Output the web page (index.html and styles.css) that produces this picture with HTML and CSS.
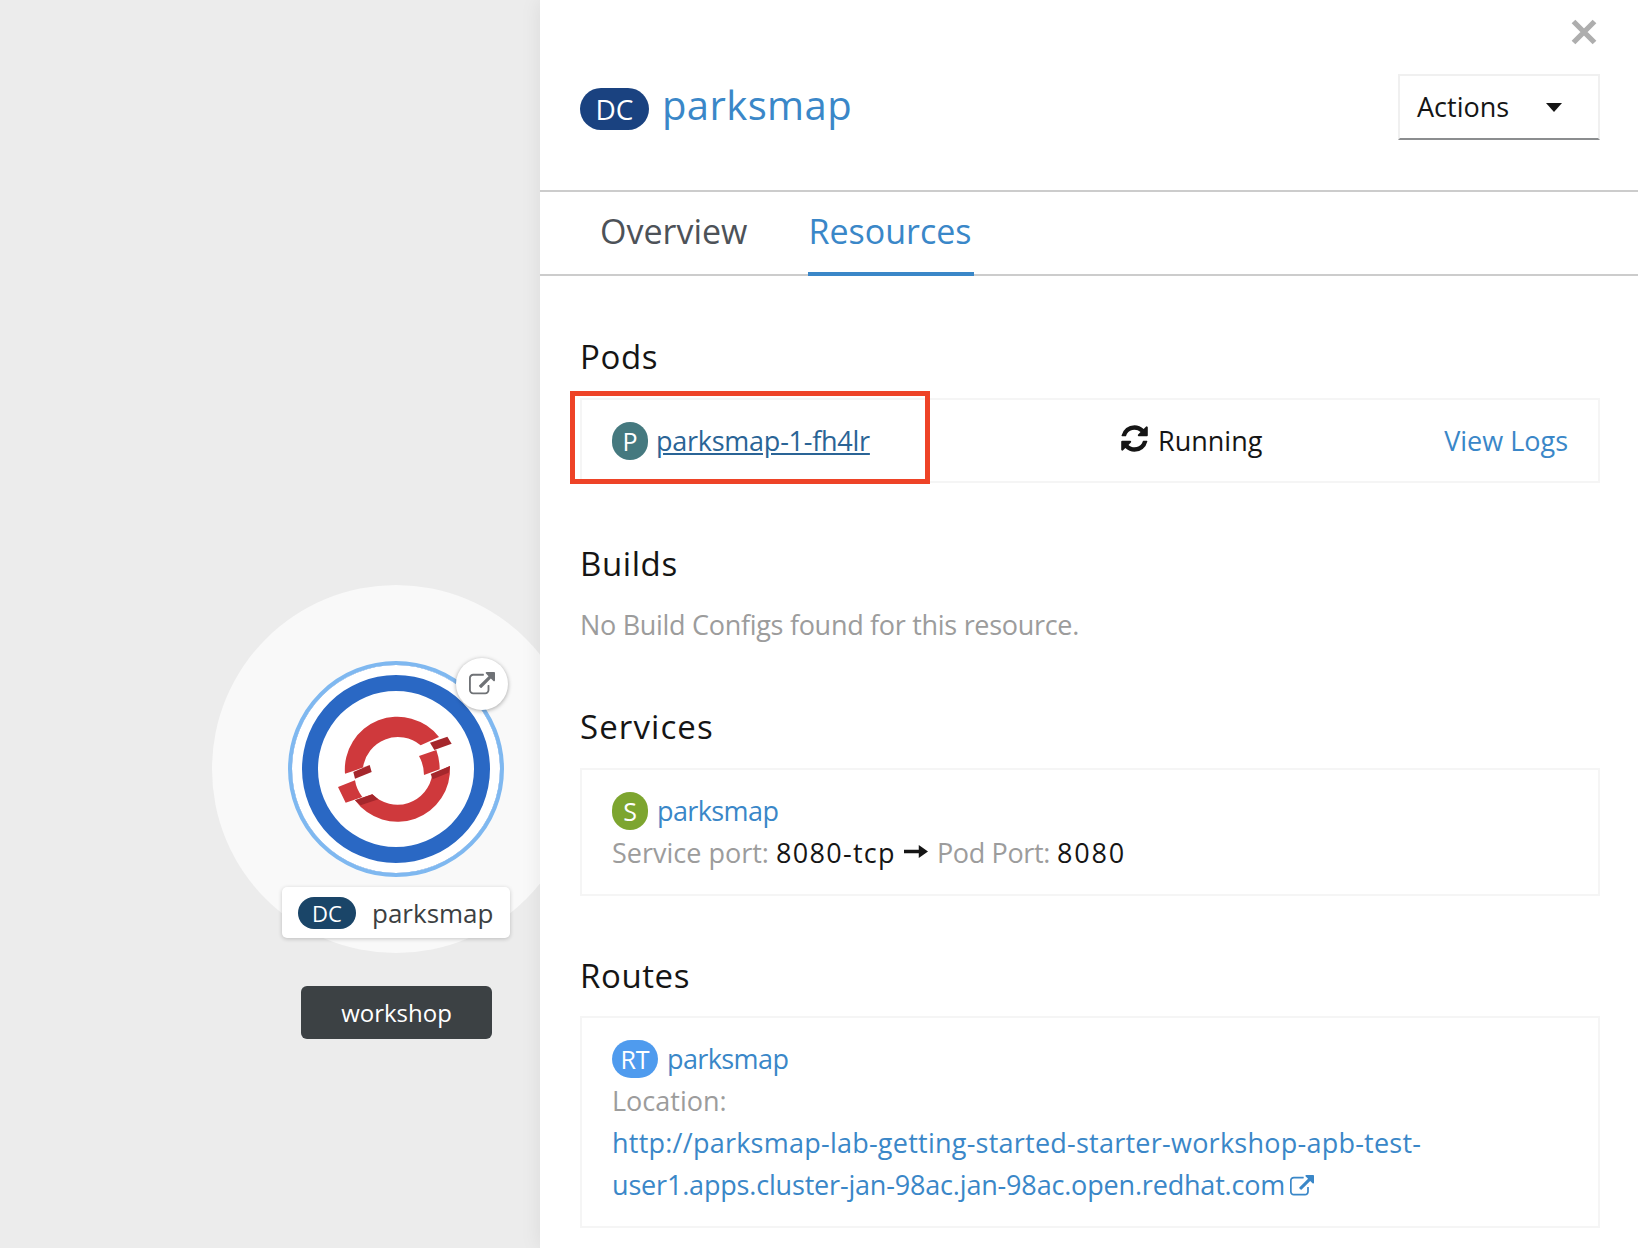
FILE: index.html
```html
<!DOCTYPE html>
<html lang="en">
<head>
    <meta charset="UTF-8">
    <title>parksmap</title>
    <link rel="stylesheet" href="styles.css">
</head>
<body>
<div class="topology">
    <div class="halo"></div>
    <div class="node-ring">
        <svg class="logo" viewBox="0 0 480 480">
            <path class="red" d="M78 248A158 158 0 0 1 360 138L305 163A106 106 0 0 0 132 230L152 222L103 240Z"/>
            <path class="red" d="M393 225A158 158 0 0 1 108 328L160 310A106 106 0 0 0 340 250Z"/>
            <path class="red" d="M300 195L352 177Q362 205 362 235L315 252Q315 222 300 195Z"/>
            <path class="red" d="M57 288L108 268Q112 295 130 318L80 335Z"/>
            <path class="dark" d="M333 155L385 137L398 158L346 177Z"/>
            <path class="dark" d="M103 243L152 222L158 243L108 263Z"/>
            <path class="dark" d="M335 249L393 225L389 245L341 265Z"/>
            <path class="dark" d="M108 328L160 310L178 325L125 343Z"/>
        </svg>
    </div>
    <div class="node-link">
        <svg class="icon-link" viewBox="0 0 1792 1792"><path d="M1408 928v320q0 119-84.5 203.5t-203.5 84.5h-832q-119 0-203.5-84.5t-84.5-203.5v-832q0-119 84.5-203.5t203.5-84.5h704q14 0 23 9t9 23v64q0 14-9 23t-23 9h-704q-66 0-113 47t-47 113v832q0 66 47 113t113 47h832q66 0 113-47t47-113v-320q0-14 9-23t23-9h64q14 0 23 9t9 23zm384-864v512q0 26-19 45t-45 19-45-19l-176-176-652 652q-10 10-23 10t-23-10l-114-114q-10-10-10-23t10-23l652-652-176-176q-19-19-19-45t19-45 45-19h512q26 0 45 19t19 45z"/></svg>
    </div>
    <div class="node-label">
        <span class="node-badge">DC</span>
        <span class="node-name">parksmap</span>
    </div>
    <div class="group-label">workshop</div>
</div>

<div class="panel">
    <div class="panel-top">
        <div class="close-row">
            <svg class="close" viewBox="0 0 24 24"><path d="M3 3L21 21M21 3L3 21"/></svg>
        </div>
        <div class="title-row">
            <div class="title">
                <span class="title-badge">DC</span>
                <span class="title-name">parksmap</span>
            </div>
            <div class="actions">
                <span>Actions</span>
                <span class="caret"></span>
            </div>
        </div>
    </div>

    <div class="tabs">
        <div class="tab">Overview</div>
        <div class="tab active">Resources</div>
    </div>

    <div class="content">
        <h2>Pods</h2>
        <div class="box pod-row">
            <div class="cell">
                <span class="badge badge-p">P</span>
                <a class="pod-link">parksmap-1-fh4lr</a>
            </div>
            <div class="cell">
                <svg class="icon-sync" viewBox="0 0 1792 1792"><path d="M1639 1056q0 5-1 7-64 268-268 434.5t-478 166.5q-146 0-282.5-55t-243.5-157l-129 129q-19 19-45 19t-45-19-19-45v-448q0-26 19-45t45-19h448q26 0 45 19t19 45-19 45l-137 137q71 66 161 102t187 36q134 0 250-65t186-179q11-17 53-117 8-23 30-23h192q13 0 22.5 9.5t9.5 22.5zm25-800v448q0 26-19 45t-45 19h-448q-26 0-45-19t-19-45 19-45l138-138q-148-137-349-137-134 0-250 65t-186 179q-11 17-53 117-8 23-30 23h-199q-13 0-22.5-9.5t-9.5-22.5v-7q65-268 270-434.5t480-166.5q146 0 284 55.5t245 156.5l130-129q19-19 45-19t45 19 19 45z"/></svg>
                <span class="running">Running</span>
            </div>
            <a class="link">View Logs</a>
            <div class="callout"></div>
        </div>

        <h2>Builds</h2>
        <p class="muted note">No Build Configs found for this resource.</p>

        <h2 class="services-head">Services</h2>
        <div class="box block">
            <div class="cell">
                <span class="badge badge-s">S</span>
                <a class="link name">parksmap</a>
            </div>
            <div class="ports">
                <span class="muted">Service port:</span> <span class="port-name">8080-tcp</span>
                <svg class="icon-arrow" viewBox="0 0 26 14"><path d="M0 5H16V0L26 7L16 14V9H0Z"/></svg>
                <span class="muted pod-port">Pod Port:</span> <span class="port-num">8080</span>
            </div>
        </div>

        <h2 class="routes-head">Routes</h2>
        <div class="box block">
            <div class="cell">
                <span class="badge badge-rt">RT</span>
                <a class="link name">parksmap</a>
            </div>
            <div class="muted">Location:</div>
            <a class="link url"><span class="url-first">http://parksmap-lab-getting-started-starter-workshop-apb-test-</span><br><span class="url-second">user1.apps.cluster-jan-98ac.jan-98ac.open.redhat.com</span><svg class="icon-url" viewBox="0 0 1792 1792"><path d="M1408 928v320q0 119-84.5 203.5t-203.5 84.5h-832q-119 0-203.5-84.5t-84.5-203.5v-832q0-119 84.5-203.5t203.5-84.5h704q14 0 23 9t9 23v64q0 14-9 23t-23 9h-704q-66 0-113 47t-47 113v832q0 66 47 113t113 47h832q66 0 113-47t47-113v-320q0-14 9-23t23-9h64q14 0 23 9t9 23zm384-864v512q0 26-19 45t-45 19-45-19l-176-176-652 652q-10 10-23 10t-23-10l-114-114q-10-10-10-23t10-23l652-652-176-176q-19-19-19-45t19-45 45-19h512q26 0 45 19t19 45z"/></svg></a>
        </div>
    </div>
</div>
</body>
</html>
```

FILE: styles.css
```css
* {
    margin: 0;
    padding: 0;
    box-sizing: border-box;
}

html, body {
    height: 100%;
    overflow: hidden;
}

body {
    display: flex;
    background: #fff;
    color: #151515;
    font-family: "Open Sans", "Noto Sans", sans-serif;
    font-size: 27px;
    line-height: 42px;
}

/* topology canvas */
.topology {
    position: relative;
    width: 540px;
    flex-shrink: 0;
    overflow: hidden;
    background: #ececec;
}

.halo {
    position: absolute;
    left: 212px;
    top: 585px;
    width: 368px;
    height: 368px;
    border-radius: 50%;
    background: #f9f9f9;
}

.node-ring {
    position: absolute;
    left: 288px;
    top: 661px;
    width: 216px;
    height: 216px;
    display: flex;
    align-items: center;
    justify-content: center;
    border-radius: 50%;
    background: #fff;
    border: 4px solid #7fb8f0;
    box-shadow: inset 0 0 0 10px #fff, inset 0 0 0 26px #2a68c4;
}

.logo {
    width: 160px;
    height: 160px;
    transform: translate(3px, 2px);
}

.red {
    fill: #cf393c;
}

.dark {
    fill: #a5272c;
}

.node-link {
    position: absolute;
    left: 456px;
    top: 658px;
    width: 52px;
    height: 52px;
    display: flex;
    align-items: center;
    justify-content: center;
    border-radius: 50%;
    background: #fff;
    box-shadow: 0 1px 4px rgba(0, 0, 0, 0.35);
}

.icon-link {
    width: 26px;
    height: 26px;
    margin: 2px 1px 0 0;
    fill: #6f7276;
}

.node-label {
    position: absolute;
    left: 282px;
    top: 887px;
    width: 228px;
    height: 51px;
    display: flex;
    align-items: center;
    gap: 16px;
    padding-left: 16px;
    border-radius: 5px;
    background: #fff;
    box-shadow: 0 1px 4px rgba(0, 0, 0, 0.2);
}

.node-badge {
    width: 58px;
    height: 32px;
    border-radius: 16px;
    background: #1a4568;
    color: #fff;
    font-size: 22px;
    line-height: 32px;
    text-align: center;
}

.node-name {
    color: #3c3f42;
    font-size: 26px;
}

.group-label {
    position: absolute;
    left: 301px;
    top: 986px;
    width: 191px;
    height: 53px;
    border-radius: 6px;
    background: #3c4144;
    color: #fff;
    font-size: 24px;
    line-height: 53px;
    text-align: center;
}

/* side panel */
.panel {
    flex: 1;
    position: relative;
    background: #fff;
    box-shadow: 0 0 20px rgba(0, 0, 0, 0.08);
}

.panel-top {
    height: 192px;
    border-bottom: 2px solid #ccc;
}

.close-row {
    height: 74px;
    display: flex;
    justify-content: flex-end;
    padding: 18px 40px 0 0;
}

.close {
    width: 28px;
    height: 28px;
    fill: none;
    stroke: #aeaeae;
    stroke-width: 4.5;
}

.title-row {
    display: flex;
    justify-content: space-between;
    padding: 0 38px 0 40px;
}

.title {
    display: flex;
    align-items: center;
    gap: 13px;
    height: 70px;
}

.title-badge {
    width: 69px;
    height: 42px;
    border-radius: 21px;
    background: #1a4280;
    color: #fff;
    font-size: 28px;
    line-height: 42px;
    text-align: center;
}

.title-name {
    margin-bottom: 8px;
    color: #3a87c8;
    font-size: 40px;
    letter-spacing: 0.4px;
}

.actions {
    width: 202px;
    height: 66px;
    display: flex;
    align-items: center;
    justify-content: space-between;
    padding: 0 36px 0 17px;
    border: 2px solid #f0f0f0;
    border-bottom-color: #8b8d8f;
}

.caret {
    border-top: 9px solid #151515;
    border-left: 8px solid transparent;
    border-right: 8px solid transparent;
}

.tabs {
    height: 84px;
    display: flex;
    gap: 61px;
    padding-left: 60px;
    border-bottom: 2px solid #ccc;
}

.tab {
    height: 84px;
    color: #4d5258;
    font-size: 34px;
    line-height: 78px;
}

.active {
    padding-right: 3px;
    color: #3a87c8;
    border-bottom: 4px solid #3a87c8;
}

.content {
    padding: 0 38px 0 40px;
}

h2 {
    margin: 60px 0 20px;
    font-size: 33px;
    font-weight: 400;
    line-height: 42px;
    letter-spacing: 0.6px;
}

.services-head {
    letter-spacing: 1.1px;
}

.routes-head {
    margin: 59px 0 19px;
}

.box {
    border: 2px solid #f5f5f5;
}

.block {
    padding: 20px 30px;
}

.pod-row {
    position: relative;
    height: 85px;
    display: grid;
    grid-template-columns: 508px 1fr auto;
    align-items: center;
    padding: 0 30px;
}

.callout {
    position: absolute;
    left: -12px;
    top: -9px;
    width: 360px;
    height: 93px;
    border: 5px solid #ee4327;
}

.cell {
    display: flex;
    align-items: center;
}

.badge {
    height: 38px;
    min-width: 36px;
    margin-right: 9px;
    border-radius: 19px;
    color: #fff;
    font-size: 25px;
    line-height: 38px;
    text-align: center;
}

.badge-p {
    background: #45797f;
}

.badge-s {
    background: #7da52f;
}

.badge-rt {
    width: 46px;
    background: #4f9bee;
}

.pod-link {
    margin-left: -1px;
    color: #2a6496;
    text-decoration: underline;
    letter-spacing: -0.25px;
}

.link {
    color: #3a87c8;
}

.name {
    letter-spacing: -0.6px;
}

.url {
    display: block;
}

.url-first {
    letter-spacing: 0.24px;
}

.url-second {
    letter-spacing: -0.18px;
}

.icon-sync {
    width: 31px;
    height: 31px;
    margin: -4px 8px 0 -1px;
    fill: #151515;
}

.port-name {
    letter-spacing: 1.3px;
}

.pod-port {
    letter-spacing: -0.35px;
}

.port-num {
    letter-spacing: 1.8px;
}

.icon-arrow {
    width: 24px;
    height: 13px;
    margin: 0 2px 5px 1px;
    fill: #151515;
}

.icon-url {
    width: 24px;
    height: 24px;
    margin-left: 5px;
    vertical-align: -4px;
    fill: #3a87c8;
}

.muted {
    color: #9c9c9c;
}

.note {
    margin-top: -1px;
    letter-spacing: -0.3px;
}
```
